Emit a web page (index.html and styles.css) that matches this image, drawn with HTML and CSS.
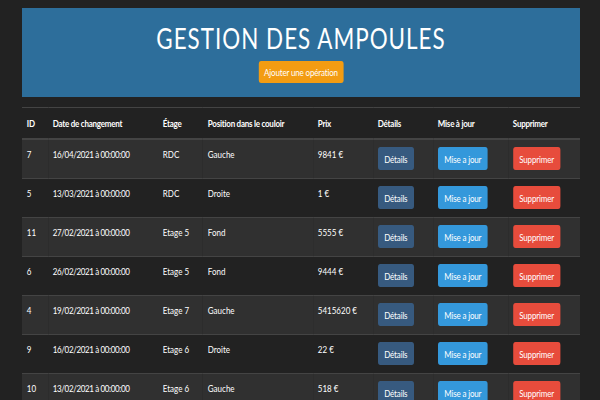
FILE: index.html
```html
<!DOCTYPE html>
<html lang="fr">
<head>
<meta charset="utf-8">
<link rel="stylesheet" href="styles.css">
</head>
<body>
<div class="frame">
<div class="page">
  <header class="hero">
    <h1 class="hero-title">GESTION DES AMPOULES</h1>
    <button class="btn btn-warning">Ajouter une opération</button>
  </header>
  <table class="grid">
    <thead>
      <tr><th class="c-id">ID</th><th class="c-date">Date de changement</th><th class="c-floor">Étage</th><th class="c-pos">Position dans le couloir</th><th class="c-price">Prix</th><th class="c-det">Détails</th><th class="c-upd">Mise à jour</th><th class="c-del">Supprimer</th></tr>
    </thead>
    <tbody>
      <tr><td>7</td><td class="date">16/04/2021 à 00:00:00</td><td>RDC</td><td>Gauche</td><td>9841 €</td><td><button class="btn btn-primary">Détails</button></td><td><button class="btn btn-info">Mise a jour</button></td><td><button class="btn btn-danger">Supprimer</button></td></tr>
      <tr><td>5</td><td class="date">13/03/2021 à 00:00:00</td><td>RDC</td><td>Droite</td><td>1 €</td><td><button class="btn btn-primary">Détails</button></td><td><button class="btn btn-info">Mise a jour</button></td><td><button class="btn btn-danger">Supprimer</button></td></tr>
      <tr><td>11</td><td class="date">27/02/2021 à 00:00:00</td><td>Etage 5</td><td>Fond</td><td>5555 €</td><td><button class="btn btn-primary">Détails</button></td><td><button class="btn btn-info">Mise a jour</button></td><td><button class="btn btn-danger">Supprimer</button></td></tr>
      <tr><td>6</td><td class="date">26/02/2021 à 00:00:00</td><td>Etage 5</td><td>Fond</td><td>9444 €</td><td><button class="btn btn-primary">Détails</button></td><td><button class="btn btn-info">Mise a jour</button></td><td><button class="btn btn-danger">Supprimer</button></td></tr>
      <tr><td>4</td><td class="date">19/02/2021 à 00:00:00</td><td>Etage 7</td><td>Gauche</td><td>5415620 €</td><td><button class="btn btn-primary">Détails</button></td><td><button class="btn btn-info">Mise a jour</button></td><td><button class="btn btn-danger">Supprimer</button></td></tr>
      <tr><td>9</td><td class="date">16/02/2021 à 00:00:00</td><td>Etage 6</td><td>Droite</td><td>22 €</td><td><button class="btn btn-primary">Détails</button></td><td><button class="btn btn-info">Mise a jour</button></td><td><button class="btn btn-danger">Supprimer</button></td></tr>
      <tr><td>10</td><td class="date">13/02/2021 à 00:00:00</td><td>Etage 6</td><td>Gauche</td><td>518 €</td><td><button class="btn btn-primary">Détails</button></td><td><button class="btn btn-info">Mise a jour</button></td><td><button class="btn btn-danger">Supprimer</button></td></tr>
    </tbody>
  </table>
</div>
</div>
</body>
</html>
```
FILE: styles.css
```css
html, body { margin: 0; padding: 0; background: #222222; overflow: hidden; }
body { font-family: Lato, "Open Sans", sans-serif; color: #ffffff; font-size: 10px; }

/* the sheet is drawn slightly condensed, as in the reference */
.frame { width: 558px; margin: 0 0 0 22px; overflow: hidden; }
.page { width: 697.5px; padding-top: 8px; transform: scaleX(0.8); transform-origin: 0 0; }

.hero { background: #2d6e9b; height: 89px; box-sizing: border-box; padding-top: 14px; text-align: center; }
.hero-title { margin: 0; font-weight: 400; font-size: 28px; line-height: 32px; letter-spacing: 0.045em; }

.btn { font-family: Lato, sans-serif; font-size: 10px; letter-spacing: -0.02em; color: #fff; border: 0; border-radius: 3px; height: 23px; padding: 0 8px; display: inline-block; vertical-align: top; }
.btn-warning { background: #f39c12; margin-top: 7px; height: 22px; padding: 0 7px; }
.btn-primary { background: #375a7f; }
.btn-info { background: #3498db; }
.btn-danger { background: #e74c3c; }

.grid { width: 100%; margin-top: 10px; border-collapse: collapse; table-layout: fixed; }
.grid th, .grid td { text-align: left; vertical-align: top; border-top: 1px solid #444; line-height: 14px; white-space: nowrap; }
.grid th { font-weight: 700; padding: 8px 6px 8px 6px; border-bottom: 2px solid #444; letter-spacing: -0.03em; }
.grid td { padding: 7px 6px 8px 6px; }
.grid td.date { letter-spacing: -0.045em; }
.grid tbody tr:nth-child(odd) { background: #303030; }

.c-id { width: 20.5px; }
.c-date { width: 125.5px; }
.c-floor { width: 44.25px; }
.c-pos { width: 125.5px; }
.c-price { width: 63px; }
.c-det { width: 63px; }
.c-upd { width: 81.75px; }
.c-del { width: 78px; }
```
